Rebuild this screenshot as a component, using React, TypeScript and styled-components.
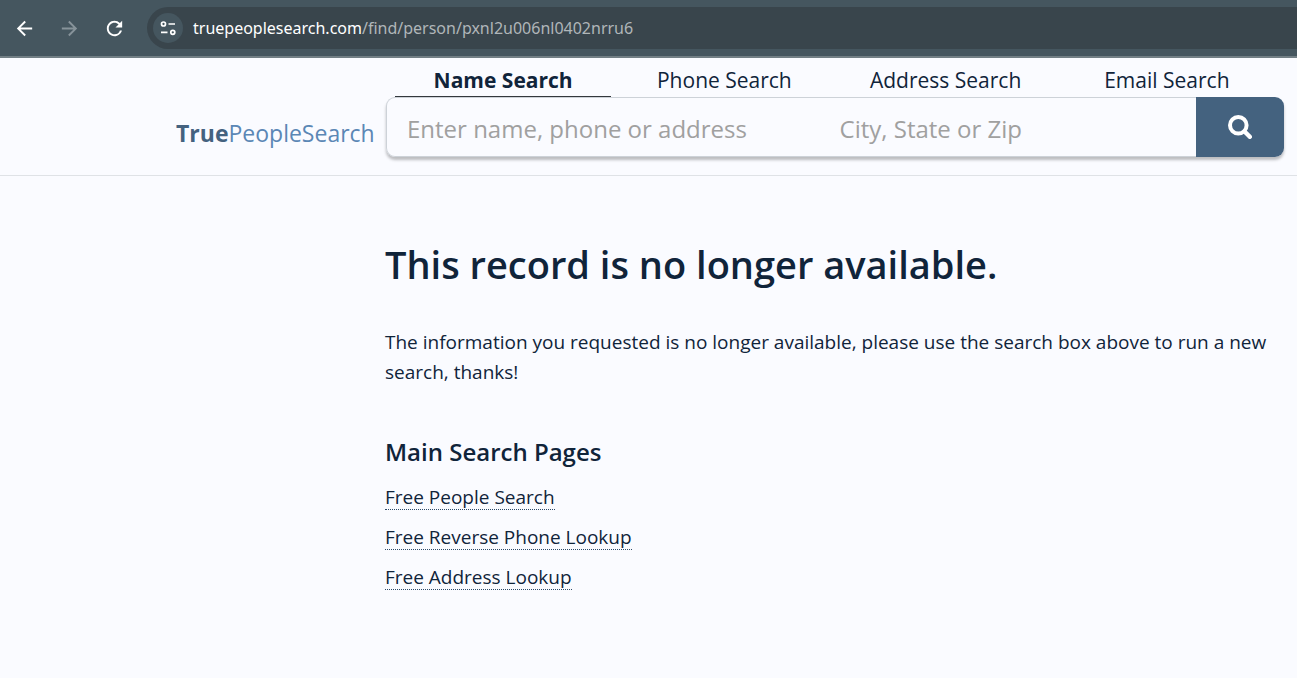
import React from "react";
import styled, { createGlobalStyle } from "styled-components";
import { MdArrowBack, MdArrowForward, MdRefresh } from "react-icons/md";

const GlobalStyle = createGlobalStyle`
  *, *::before, *::after { box-sizing: border-box; }
  body {
    margin: 0;
    background: #fafbff;
    color: #10243a;
    font-family: "Segoe UI", "Open Sans", "Noto Sans", sans-serif;
    font-size: 19px;
    line-height: 30px;
  }
`;

const BrowserBar = styled.div`
  display: flex;
  align-items: center;
  height: 58px;
  padding-left: 2px;
  background: #45565f;
  border-bottom: 2px solid #727f85;
`;

const NavButton = styled.button`
  display: flex;
  align-items: center;
  justify-content: center;
  width: 45px;
  height: 40px;
  padding: 0;
  border: 0;
  background: none;
  color: #ffffff;

  &:disabled { color: #87939a; }
`;

const AddressBar = styled.div`
  display: flex;
  flex: 1;
  align-items: center;
  gap: 10px;
  height: 42px;
  margin-left: 10px;
  padding-left: 6px;
  border-radius: 21px 0 0 21px;
  background: #39454c;
`;

const SiteInfo = styled.button`
  display: flex;
  align-items: center;
  justify-content: center;
  width: 30px;
  height: 30px;
  padding: 0;
  border: 0;
  border-radius: 50%;
  background: #45565f;
  color: #ffffff;
`;

const Url = styled.span`
  color: #b0b6b9;
  font-family: "Segoe UI", "Noto Sans", sans-serif;
  font-size: 16px;
  line-height: 24px;
`;

const Domain = styled.span`
  color: #ffffff;
`;

const Header = styled.header`
  display: flex;
  padding: 7px 13px 18px 176px;
  border-bottom: 1px solid #dfe2e6;
`;

const Logo = styled.a`
  flex: none;
  width: 210px;
  padding-top: 52px;
  color: #5b87b5;
  font-size: 23px;
  line-height: 32px;
  text-decoration: none;
  white-space: nowrap;
`;

const LogoStrong = styled.strong`
  color: #44627f;
`;

const SearchArea = styled.div`
  flex: 1;
  min-width: 0;
`;

const Tabs = styled.nav`
  display: grid;
  grid-template-columns: repeat(4, 1fr);
  gap: 5px;
  padding: 0 9px;
`;

const Tab = styled.a<{ $active?: boolean }>`
  height: 32px;
  border-bottom: 1px solid ${(p) => (p.$active ? "#33383d" : "transparent")};
  color: #10243a;
  font-size: 21px;
  font-weight: ${(p) => (p.$active ? 700 : 400)};
  text-align: center;
  text-decoration: none;
  white-space: nowrap;
`;

const SearchForm = styled.form`
  display: flex;
  height: 60px;
  border-radius: 9px;
  box-shadow: 0 3px 3px rgba(0, 0, 0, 0.25);
`;

const Fields = styled.div`
  display: flex;
  flex: 1;
  min-width: 0;
  border: 1px solid #cdd2d8;
  border-right: 0;
  border-radius: 9px 0 0 9px;
  background: #fafbff;
`;

const Field = styled.input<{ $grow: number }>`
  flex: ${(p) => p.$grow} 1 0;
  min-width: 0;
  padding: 4px 20px 0;
  border: 0;
  outline: 0;
  background: transparent;
  color: #10243a;
  font: inherit;
  font-size: 24px;

  &::placeholder { color: #a0a0a0; opacity: 1; }
`;

const SearchButton = styled.button`
  display: flex;
  align-items: center;
  justify-content: center;
  width: 88px;
  padding: 0;
  border: 0;
  border-radius: 0 9px 9px 0;
  background: #44627f;
  color: #ffffff;
`;

const Main = styled.main`
  padding: 64px 13px 40px 385px;
`;

const Title = styled.h1`
  margin: 0;
  font-size: 38px;
  font-weight: 600;
  line-height: 48px;
`;

const Message = styled.p`
  margin: 39px 0 0;
`;

const SectionTitle = styled.h2`
  margin: 48px 0 0;
  font-size: 24px;
  font-weight: 600;
  line-height: 34px;
`;

const LinkList = styled.ul`
  margin: 0;
  padding: 8px 0 0;
  list-style: none;
`;

const LinkItem = styled.li`
  height: 40px;
  padding-top: 5px;
`;

const PageLink = styled.a`
  display: inline-block;
  height: 28px;
  border-bottom: 1px dotted #2d4a68;
  color: #10243a;
  text-decoration: none;
`;

const TuneIcon = () => (
  <svg width="16" height="16" viewBox="0 0 16 16" fill="none" stroke="currentColor" strokeWidth="1.7" aria-hidden="true">
    <circle cx="3.5" cy="4" r="2" />
    <path d="M8.5 4H15M1 12.3H7.5" />
    <circle cx="12.8" cy="12.3" r="2" />
  </svg>
);

const SearchIcon = () => (
  <svg width="24" height="24" viewBox="0 0 24 24" fill="none" stroke="currentColor" aria-hidden="true">
    <circle cx="10.3" cy="10.3" r="8.3" strokeWidth="4" />
    <path d="M16.8 16.8L21.8 21.8" strokeWidth="4.4" strokeLinecap="round" />
  </svg>
);

const tabs = ["Name Search", "Phone Search", "Address Search", "Email Search"];
const pages = ["Free People Search", "Free Reverse Phone Lookup", "Free Address Lookup"];

export default function App() {
  return (
    <>
      <GlobalStyle />
      <BrowserBar>
        <NavButton aria-label="Back"><MdArrowBack size={23} /></NavButton>
        <NavButton aria-label="Forward" disabled><MdArrowForward size={23} /></NavButton>
        <NavButton aria-label="Reload"><MdRefresh size={23} /></NavButton>
        <AddressBar>
          <SiteInfo aria-label="View site information"><TuneIcon /></SiteInfo>
          <Url><Domain>truepeoplesearch.com</Domain>/find/person/pxnl2u006nl0402nrru6</Url>
        </AddressBar>
      </BrowserBar>
      <Header>
        <Logo href="#"><LogoStrong>True</LogoStrong>PeopleSearch</Logo>
        <SearchArea>
          <Tabs>
            {tabs.map((label, i) => (
              <Tab key={label} href="#" $active={i === 0}>{label}</Tab>
            ))}
          </Tabs>
          <SearchForm onSubmit={(e) => e.preventDefault()}>
            <Fields>
              <Field $grow={7} aria-label="Name, phone or address" placeholder="Enter name, phone or address" />
              <Field $grow={6} aria-label="City, State or Zip" placeholder="City, State or Zip" />
            </Fields>
            <SearchButton type="submit" aria-label="Search"><SearchIcon /></SearchButton>
          </SearchForm>
        </SearchArea>
      </Header>
      <Main>
        <Title>This record is no longer available.</Title>
        <Message>
          The information you requested is no longer available, please use the search box above to run a new
          search, thanks!
        </Message>
        <SectionTitle>Main Search Pages</SectionTitle>
        <LinkList>
          {pages.map((label) => (
            <LinkItem key={label}><PageLink href="#">{label}</PageLink></LinkItem>
          ))}
        </LinkList>
      </Main>
    </>
  );
}
